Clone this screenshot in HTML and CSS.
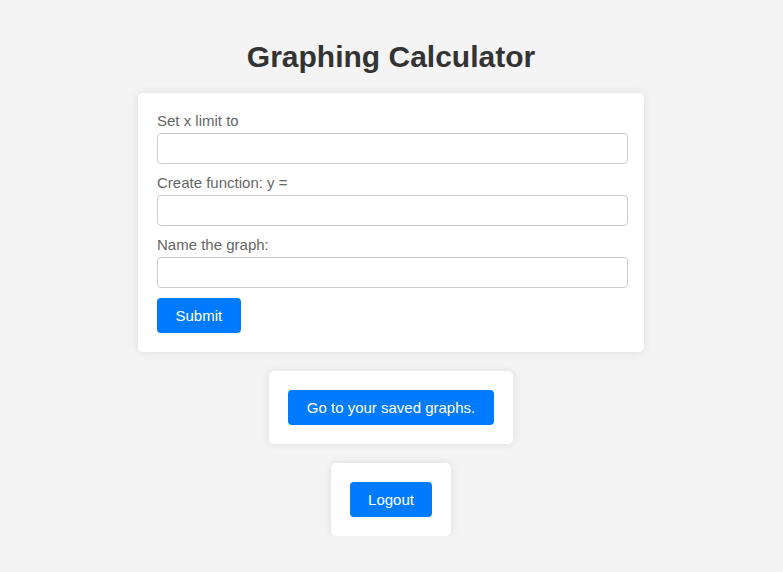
FILE: index.html
```html
<!DOCTYPE html>
<html lang="en">
<head>
<meta charset="utf-8">
<title>Graphing Calculator</title>
<link rel="stylesheet" href="styles.css">
</head>
<body>
  <h1 class="title">Graphing Calculator</h1>
  <form class="card form-card">
    <label class="field-label" for="xlimit">Set x limit to</label>
    <input class="field-input" id="xlimit" type="text">
    <label class="field-label" for="func">Create function: y =</label>
    <input class="field-input" id="func" type="text">
    <label class="field-label" for="gname">Name the graph:</label>
    <input class="field-input" id="gname" type="text">
    <button class="btn" type="button">Submit</button>
  </form>
  <div class="card small-card">
    <button class="btn" type="button">Go to your saved graphs.</button>
  </div>
  <div class="card small-card">
    <button class="btn" type="button">Logout</button>
  </div>
</body>
</html>
```

FILE: styles.css
```css
html, body {
  margin: 0;
  padding: 0;
}
body {
  background: #f4f4f4;
  font-family: "Liberation Sans", Arial, sans-serif;
  font-size: 15px;
  color: #333;
  display: flex;
  flex-direction: column;
  align-items: center;
  padding-top: 39px;
  gap: 19px;
}
.title {
  margin: 0 1px 0 0;
  font-size: 30px;
  line-height: 35px;
  font-weight: bold;
  color: #333;
}
.card {
  background: #fff;
  border-radius: 5px;
  box-shadow: 0 0 10px rgba(0, 0, 0, 0.1);
  box-sizing: border-box;
  margin-right: 1px;
}
.form-card {
  width: 506px;
  padding: 19px 16px 19px 19px;
  display: flex;
  flex-direction: column;
  align-items: flex-start;
}
.small-card {
  padding: 19px;
}
.field-label {
  display: block;
  color: #666;
  line-height: 17px;
  margin-bottom: 4px;
}
.field-input {
  width: 100%;
  box-sizing: border-box;
  height: 31px;
  margin: 0 0 10px;
  border: 1px solid #ccc;
  border-radius: 4px;
  background: #fff;
  padding: 0 8px;
  font-family: inherit;
  font-size: 15px;
}
.btn {
  display: block;
  background: #007bff;
  color: #fff;
  border: none;
  border-radius: 4px;
  font-family: "Liberation Sans", Arial, sans-serif;
  font-size: 15px;
  line-height: 19px;
  padding: 8px 18.5px;
  cursor: pointer;
}
```
